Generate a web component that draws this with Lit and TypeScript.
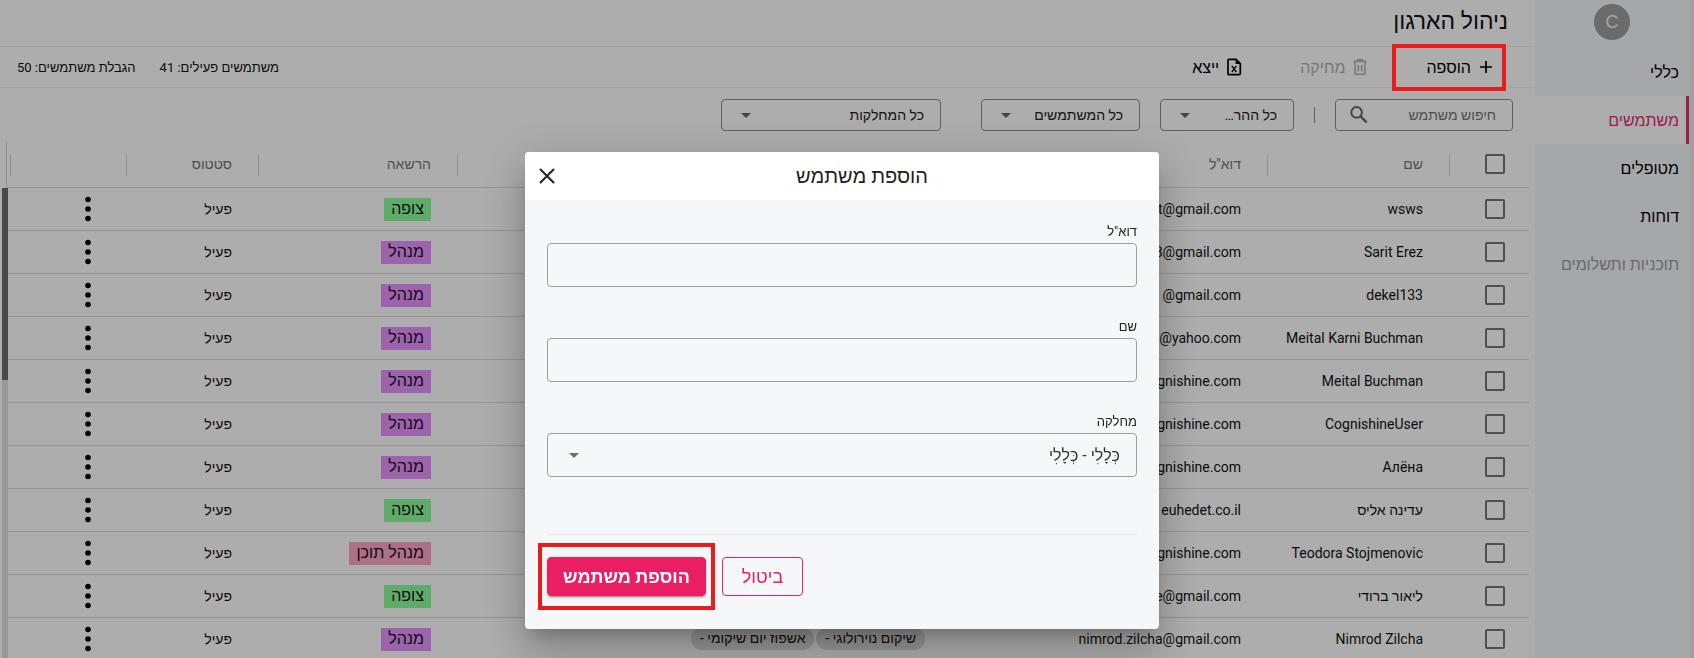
import { LitElement, html, css, svg } from "lit";
import { customElement, state } from "lit/decorators.js";
import { classMap } from "lit/directives/class-map.js";

type Role = "viewer" | "manager" | "content";

interface User {
  name: string;
  email: string;
  role: Role;
  departments?: string[];
}

const ROLE_LABELS: Record<Role, string> = {
  viewer: "צופה",
  manager: "מנהל",
  content: "מנהל תוכן",
};

const USERS: User[] = [
  { name: "wsws", email: "t@gmail.com", role: "viewer" },
  { name: "Sarit Erez", email: "8@gmail.com", role: "manager" },
  { name: "dekel133", email: "@gmail.com", role: "manager" },
  { name: "Meital Karni Buchman", email: "@yahoo.com", role: "manager" },
  { name: "Meital Buchman", email: "cognishine.com", role: "manager" },
  { name: "CognishineUser", email: "cognishine.com", role: "manager" },
  { name: "Алёна", email: "cognishine.com", role: "manager" },
  { name: "עדינה אליס", email: "euhedet.co.il", role: "viewer" },
  { name: "Teodora Stojmenovic", email: "cognishine.com", role: "content" },
  { name: "ליאור ברודי", email: "e@gmail.com", role: "viewer" },
  {
    name: "Nimrod Zilcha",
    email: "nimrod.zilcha@gmail.com",
    role: "manager",
    departments: ["שיקום נוירולוגי -", "אשפוז יום שיקומי -"],
  },
];

const NAV = [
  { label: "כללי" },
  { label: "משתמשים", active: true },
  { label: "מטופלים" },
  { label: "דוחות" },
  { label: "תוכניות ותשלומים", disabled: true },
];

const arrow = svg`<svg class="arrow" viewBox="0 0 10 5" aria-hidden="true"><path d="M0 0h10L5 5z" fill="currentColor"/></svg>`;

@customElement("add-user-dialog")
export class AddUserDialog extends LitElement {
  static styles = css`
    * { box-sizing: border-box; }
    :host {
      display: block;
      width: 634px;
      max-width: 100%;
      border-radius: 4px;
      background: #f5f7f9;
      color: #212121;
      box-shadow: 0 11px 15px -7px rgba(0, 0, 0, 0.2), 0 24px 38px 3px rgba(0, 0, 0, 0.14),
        0 9px 46px 8px rgba(0, 0, 0, 0.12);
    }
    .head {
      display: grid;
      grid-template-columns: 1fr 22px;
      gap: 7px;
      align-items: center;
      height: 48px;
      padding: 0 0 0 11px;
      background: #fff;
      border-radius: 4px 4px 0 0;
    }
    h2 {
      margin: 0;
      font-size: 20px;
      line-height: 32px;
      font-weight: 400;
      text-align: center;
    }
    .close {
      display: grid;
      place-items: center;
      width: 22px;
      height: 22px;
      padding: 0;
      border: 0;
      background: none;
      color: inherit;
    }
    .close svg { width: 16px; height: 16px; }
    .body { padding: 22px; }
    .field { display: block; margin-bottom: 30px; }
    .field label {
      display: block;
      height: 21px;
      font-size: 13px;
      line-height: 20px;
    }
    .box { position: relative; }
    .box input,
    .box select {
      display: block;
      width: 100%;
      height: 44px;
      margin: 0;
      padding: 0 16px;
      border: 1px solid #9c9ea0;
      border-radius: 4px;
      background: transparent;
      color: #333;
      font: inherit;
      font-size: 16px;
      appearance: none;
      outline: none;
    }
    .arrow {
      position: absolute;
      left: 22px;
      top: 20px;
      width: 10px;
      height: 5px;
      color: #6d6e70;
      pointer-events: none;
    }
    .actions {
      display: flex;
      flex-direction: row-reverse;
      gap: 16px;
      margin-top: 57px;
      padding: 22px 0 11px;
      border-top: 1px solid #e4e6e8;
    }
    .marked { position: relative; }
    .marked::after {
      content: "";
      position: absolute;
      inset: -14px -9px;
      border: 4px solid #e81c1c;
      pointer-events: none;
    }
    .btn {
      height: 39px;
      border-radius: 4px;
      border: 1px solid #e91e63;
      font: inherit;
      font-size: 18px;
      font-weight: 500;
    }
    .primary {
      min-width: 159px;
      background: #e91e63;
      color: #fff;
      font-weight: 700;
      box-shadow: 0 3px 1px -2px rgba(0, 0, 0, 0.2), 0 2px 2px 0 rgba(0, 0, 0, 0.14), 0 1px 5px 0 rgba(0, 0, 0, 0.12);
    }
    .outline { min-width: 81px; background: transparent; color: #e91e63; }
  `;

  render() {
    return html`
      <div class="head">
        <h2 id="title">הוספת משתמש</h2>
        <button class="close" aria-label="סגירה">
          <svg viewBox="0 0 16 16" fill="none" stroke="currentColor" stroke-width="2" stroke-linecap="round">
            <path d="M1.5 1.5l13 13M14.5 1.5l-13 13" />
          </svg>
        </button>
      </div>
      <div class="body">
        <div class="field">
          <label for="email">דוא"ל</label>
          <div class="box"><input id="email" type="email" /></div>
        </div>
        <div class="field">
          <label for="name">שם</label>
          <div class="box"><input id="name" type="text" /></div>
        </div>
        <div class="field">
          <label for="dept">מחלקה</label>
          <div class="box">
            <select id="dept"><option>כְּלָלִי - כְּלָלִי</option></select>
            ${arrow}
          </div>
        </div>
        <div class="actions">
          <div class="marked"><button class="btn primary">הוספת משתמש</button></div>
          <button class="btn outline">ביטול</button>
        </div>
      </div>
    `;
  }
}

@customElement("app-root")
export class AppRoot extends LitElement {
  @state() private users = USERS;

  static styles = css`
    * { box-sizing: border-box; }
    :host {
      display: grid;
      grid-template-columns: 5px 154px minmax(0, 1fr);
      height: 100vh;
      overflow: hidden;
      direction: rtl;
      background: #fff;
      color: #111;
      font-family: Roboto, "Liberation Sans", sans-serif;
      font-size: 14px;
    }
    .edge { background: #ebecee; }
    .side { background: #f5f7f9; }
    .avatar {
      display: grid;
      place-items: center;
      width: 36px;
      height: 36px;
      margin: 4px auto 8px;
      border-radius: 50%;
      background: #9e9e9e;
      color: #f5f5f5;
      font-family: "Liberation Sans", sans-serif;
      font-size: 18px;
    }
    .nav a {
      display: flex;
      align-items: center;
      height: 48px;
      padding: 0 10px;
      color: #000;
      font-size: 16px;
      font-weight: 500;
      text-decoration: none;
    }
    .nav a.active {
      padding-right: 7px;
      border-right: 3px solid #e62a74;
      background: #fff;
      color: #e62a74;
    }
    .nav a.disabled { color: #9c9ea0; font-weight: 400; }
    .main { display: flex; flex-direction: column; min-width: 0; }
    h1 {
      height: 47px;
      margin: 0;
      padding: 0 27px;
      border-bottom: 1px solid #f1f1f1;
      font-size: 23px;
      line-height: 43px;
      font-weight: 400;
    }
    .toolbar {
      display: flex;
      align-items: center;
      gap: 57px;
      height: 41px;
      padding: 0 40px 0 17px;
      border-bottom: 1px solid #f1f1f1;
    }
    .tool {
      display: flex;
      align-items: center;
      gap: 6px;
      padding: 0;
      border: 0;
      background: none;
      color: #000;
      font: inherit;
      font-size: 16px;
      font-weight: 500;
    }
    .tool svg { width: 18px; height: 18px; }
    .tool:disabled { color: #b0b0b0; font-weight: 400; }
    .marked { position: relative; }
    .marked::after {
      content: "";
      position: absolute;
      inset: -14px -11px -14px -34px;
      z-index: 3;
      border: 4px solid #e81c1c;
      pointer-events: none;
    }
    .stats { display: flex; gap: 24px; margin-right: auto; font-size: 13px; }
    .filters {
      display: flex;
      align-items: center;
      gap: 20px;
      height: 54px;
      padding: 0 22px;
    }
    .control { position: relative; height: 32px; }
    .control input,
    .control select {
      display: block;
      width: 100%;
      height: 32px;
      margin: 0;
      padding: 0 16px;
      border: 1px solid #8c8c8c;
      border-radius: 4px;
      background: transparent;
      color: #222;
      font: inherit;
      appearance: none;
      outline: none;
    }
    .control input::placeholder { color: #757575; opacity: 1; }
    .control .arrow {
      position: absolute;
      left: 20px;
      top: 14px;
      width: 10px;
      height: 5px;
      color: #666;
      pointer-events: none;
    }
    .search { width: 178px; }
    .search svg {
      position: absolute;
      left: 14px;
      top: 6px;
      width: 20px;
      height: 20px;
      color: #666;
    }
    .narrow { width: 134px; }
    .medium { width: 159px; }
    .wide { width: 220px; margin-right: 20px; }
    .rule { width: 1px; height: 16px; background: #8c8c8c; }
    .grid {
      display: grid;
      grid-template-columns: minmax(0, 1fr) 8px;
      padding-right: 6px;
    }
    table { width: 100%; border-collapse: separate; border-spacing: 0; table-layout: fixed; }
    th, td {
      height: 43px;
      padding: 0 26px 0 0;
      border-bottom: 1px solid #dcdcdc;
      text-align: right;
      font-weight: 400;
      white-space: nowrap;
      overflow: hidden;
    }
    th { height: 46px; padding: 0; color: #757575; }
    th span {
      display: block;
      height: 22px;
      padding-right: 26px;
      border-left: 1px solid #d9d9d9;
      line-height: 20px;
    }
    th.pick span { padding-right: 24px; }
    th.c-menu { padding-left: 2px; }
    td.pick { padding-right: 24px; }
    .c-pick { width: 80px; }
    .c-name { width: 182px; }
    .c-mail { width: 316px; }
    .c-role { width: 199px; }
    .c-status { width: 132px; }
    .c-menu { width: 118px; }
    .check {
      display: block;
      width: 20px;
      height: 20px;
      margin: 0;
      border: 2px solid #757575;
      border-radius: 2px;
      appearance: none;
    }
    .tag {
      display: inline-block;
      height: 23px;
      padding: 0 7px;
      font-size: 16px;
      line-height: 22px;
    }
    .viewer { background: #8dfe9d; }
    .manager { background: #e893ff; }
    .content { background: #ffa5c8; }
    .chips { display: flex; gap: 2px; }
    .chip {
      height: 22px;
      padding: 0 9px;
      border-radius: 11px;
      background: #dcdcdc;
      line-height: 20px;
    }
    .more {
      display: block;
      width: 26px;
      height: 26px;
      margin: 0 0 0 auto;
      padding: 0;
      border: 0;
      background: none;
      color: #000;
    }
    td.menu { padding-right: 25px; }
    .more svg { display: block; width: 26px; height: 26px; }
    .rail { display: flex; flex-direction: column; align-items: flex-start; }
    .corner {
      width: 2px;
      height: 46px;
      margin-right: 0;
      border: solid #d0d0d0;
      border-width: 0 0 1px 1px;
    }
    .track { flex: 1; width: 6px; background: #e0e0e0; }
    .thumb { height: 192px; background: #6c6c6c; }
    .backdrop {
      position: fixed;
      inset: 0;
      z-index: 2;
      display: flex;
      justify-content: center;
      align-items: flex-start;
      padding: 152px 10px 0 0;
      background: rgba(0, 0, 0, 0.32);
    }
  `;

  private renderRow(user: User) {
    return html`
      <tr>
        <td class="pick"><input class="check" type="checkbox" aria-label=${user.name} /></td>
        <td>${user.name}</td>
        <td><bdi dir="ltr">${user.email}</bdi></td>
        <td>
          <div class="chips">${(user.departments ?? []).map((d) => html`<span class="chip">${d}</span>`)}</div>
        </td>
        <td><span class=${classMap({ tag: true, [user.role]: true })}>${ROLE_LABELS[user.role]}</span></td>
        <td>פעיל</td>
        <td class="menu">
          <button class="more" aria-label="אפשרויות">
            <svg viewBox="0 0 26 26" fill="currentColor">
              <circle cx="13" cy="3.5" r="2.8" /><circle cx="13" cy="13" r="2.8" /><circle cx="13" cy="22.5" r="2.8" />
            </svg>
          </button>
        </td>
      </tr>
    `;
  }

  private renderSelect(size: string, label: string) {
    return html`
      <div class="control ${size}">
        <select aria-label=${label}><option>${label}</option></select>
        ${arrow}
      </div>
    `;
  }

  render() {
    return html`
      <div class="edge"></div>
      <aside class="side">
        <div class="avatar">C</div>
        <nav class="nav">
          ${NAV.map(
            (n) => html`<a href="#" class=${classMap({ active: !!n.active, disabled: !!n.disabled })}>${n.label}</a>`
          )}
        </nav>
      </aside>
      <main class="main">
        <h1>ניהול הארגון</h1>
        <div class="toolbar">
          <div class="marked">
            <button class="tool">
              <svg viewBox="0 0 18 18" fill="none" stroke="currentColor" stroke-width="1.7"><path d="M9 3v12M3 9h12" /></svg>
              הוספה
            </button>
          </div>
          <button class="tool" disabled>
            <svg viewBox="0 0 18 18" fill="none" stroke="currentColor" stroke-width="1.5">
              <path d="M2.5 3.6h13M6.5 3V1.7h5V3M4 4v11.2q0 1.1 1.1 1.1h7.8q1.1 0 1.1-1.1V4M7.3 7v6.5M10.7 7v6.5" />
            </svg>
            מחיקה
          </button>
          <button class="tool">
            <svg viewBox="0 0 18 18" fill="none" stroke="currentColor" stroke-width="1.7">
              <path d="M3 2.3q0-.9.9-.9h7.1L15.3 5.7v10q0 .9-.9.9H3.9q-.9 0-.9-.9z" />
              <path d="M10.6 1.4v4.6h4.7z" fill="currentColor" stroke="none" />
              <path d="M6.8 7.8l4.6 6.2M11.4 7.8l-4.6 6.2" stroke-width="1.3" />
            </svg>
            ייצא
          </button>
          <div class="stats"><span>משתמשים פעילים: 41</span><span>הגבלת משתמשים: 50</span></div>
        </div>
        <div class="filters">
          <div class="control search">
            <input type="search" placeholder="חיפוש משתמש" aria-label="חיפוש משתמש" />
            <svg viewBox="0 0 20 20" fill="none" stroke="currentColor" stroke-width="2">
              <circle cx="7.6" cy="7.4" r="5.3" /><path d="M11.6 11.4l6 6" stroke-width="2.4" />
            </svg>
          </div>
          <div class="rule"></div>
          ${this.renderSelect("narrow", "כל ההר…")} ${this.renderSelect("medium", "כל המשתמשים")}
          ${this.renderSelect("wide", "כל המחלקות")}
        </div>
        <div class="grid">
          <table>
            <thead>
              <tr>
                <th class="c-pick pick"><span><input class="check" type="checkbox" aria-label="בחירת הכל" /></span></th>
                <th class="c-name"><span>שם</span></th>
                <th class="c-mail"><span>דוא"ל</span></th>
                <th><span></span></th>
                <th class="c-role"><span>הרשאה</span></th>
                <th class="c-status"><span>סטטוס</span></th>
                <th class="c-menu"><span></span></th>
              </tr>
            </thead>
            <tbody>
              ${this.users.map((u) => this.renderRow(u))}
            </tbody>
          </table>
          <div class="rail">
            <div class="corner"></div>
            <div class="track"><div class="thumb"></div></div>
          </div>
        </div>
      </main>
      <div class="backdrop">
        <add-user-dialog role="dialog" aria-modal="true" aria-label="הוספת משתמש"></add-user-dialog>
      </div>
    `;
  }
}
